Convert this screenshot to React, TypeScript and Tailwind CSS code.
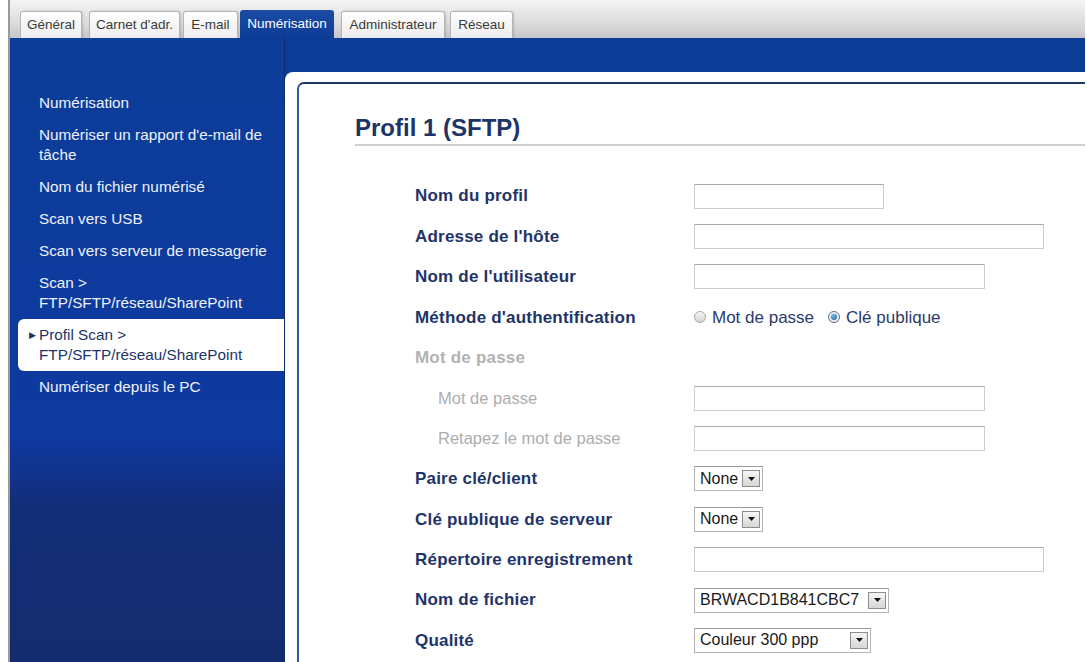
import React from "react";

// onglets du haut : largeur et marge mesurées sur la capture
const TABS = [
  { label: "Général", cls: "ml-[10px] w-[62px]" },
  { label: "Carnet d'adr.", cls: "ml-[7px] w-[91px]" },
  { label: "E-mail", cls: "ml-[3px] w-[55px]" },
  { label: "Numérisation", cls: "ml-[2px] w-[94px]", active: true },
  { label: "Administrateur", cls: "ml-[7px] w-[104px]" },
  { label: "Réseau", cls: "ml-[5px] w-[63px]" },
];

const MENU = [
  { lines: ["Numérisation"] },
  { lines: ["Numériser un rapport d'e-mail de", "tâche"] },
  { lines: ["Nom du fichier numérisé"] },
  { lines: ["Scan vers USB"] },
  { lines: ["Scan vers serveur de messagerie"] },
  { lines: ["Scan >", "FTP/SFTP/réseau/SharePoint"] },
  { lines: ["Profil Scan >", "FTP/SFTP/réseau/SharePoint"], active: true },
  { lines: ["Numériser depuis le PC"] },
];

function TextInput({ w }: { w: string }) {
  return (
    <div
      className={`${w} h-[25px] border border-[#cdcdcd] border-t-[#ababab] bg-white`}
    />
  );
}

function Select({ value, w }: { value: string; w: string }) {
  return (
    <div
      className={`${w} h-[25px] border border-[#b4b4b4] border-t-[#9a9a9a] bg-white flex items-center justify-between pl-[5px] pr-[2px]`}
    >
      <span className="text-[16px] text-[#1a1a1a] leading-none">{value}</span>
      <span className="w-[18px] h-[17px] border border-[#8d8d8d] bg-[linear-gradient(to_bottom,#f6f6f6,#d6d6d6)] flex items-center justify-center">
        <svg width="7" height="4" viewBox="0 0 7 4">
          <path d="M0 0 L7 0 L3.5 4 Z" fill="#111" />
        </svg>
      </span>
    </div>
  );
}

function Radio({ checked }: { checked?: boolean }) {
  return (
    <span
      className={
        checked
          ? "w-[12px] h-[12px] rounded-full border border-[#5d6f86] bg-[#e9eef3] flex items-center justify-center"
          : "w-[12px] h-[12px] rounded-full border border-[#a9a9a9] bg-[linear-gradient(to_bottom,#f4f4f4,#d4d4d4)]"
      }
    >
      {checked && (
        <span className="w-[6px] h-[6px] rounded-full bg-[radial-gradient(circle_at_40%_35%,#6fb7e6,#1e5f93)]" />
      )}
    </span>
  );
}

type Row = {
  label: string;
  kind?: "bold" | "muted" | "sub";
  field?: React.ReactNode;
};

const ROWS: Row[] = [
  { label: "Nom du profil", field: <TextInput w="w-[190px]" /> },
  { label: "Adresse de l'hôte", field: <TextInput w="w-[350px]" /> },
  { label: "Nom de l'utilisateur", field: <TextInput w="w-[291px]" /> },
  {
    label: "Méthode d'authentification",
    field: (
      <div className="flex items-center text-[17px] text-[#2b3a6b]">
        <Radio />
        <span className="ml-[6px]">Mot de passe</span>
        <span className="ml-[14px]">
          <Radio checked />
        </span>
        <span className="ml-[6px]">Clé publique</span>
      </div>
    ),
  },
  { label: "Mot de passe", kind: "muted" },
  { label: "Mot de passe", kind: "sub", field: <TextInput w="w-[291px]" /> },
  { label: "Retapez le mot de passe", kind: "sub", field: <TextInput w="w-[291px]" /> },
  { label: "Paire clé/client", field: <Select value="None" w="w-[69px]" /> },
  { label: "Clé publique de serveur", field: <Select value="None" w="w-[69px]" /> },
  { label: "Répertoire enregistrement", field: <TextInput w="w-[350px]" /> },
  { label: "Nom de fichier", field: <Select value="BRWACD1B841CBC7" w="w-[195px]" /> },
  {
    label: "Qualité",
    field: <Select value="Couleur 300 ppp" w="w-[177px]" />,
  },
];

export default function App() {
  return (
    <div className="w-[1087px] h-[662px] overflow-hidden bg-white pl-[8px] pr-[2px] font-['Liberation_Sans',Arial,sans-serif]">
      <div className="h-full border-l-2 border-[#9a9a9a] flex flex-col">
        {/* Onglets */}
        <div className="h-[38px] shrink-0 flex items-end bg-[linear-gradient(to_bottom,#f4f4f4,#dcdcdc_60%,#c6c6c6)]">
          {TABS.map((t) =>
            t.active ? (
              <div
                key={t.label}
                className={`${t.cls} h-[28px] rounded-t-[3px] bg-[linear-gradient(to_bottom,#1c4ba6,#0d3c97)] text-white text-[13.5px] flex items-center justify-center`}
              >
                {t.label}
              </div>
            ) : (
              <div
                key={t.label}
                className={`${t.cls} h-[27px] rounded-t-[3px] border border-b-0 border-[#b5b5b5] bg-[linear-gradient(to_bottom,#ffffff,#ececec)] text-[#3a3a3a] text-[13.5px] flex items-center justify-center shadow-[1px_0_2px_rgba(0,0,0,0.15)]`}
              >
                {t.label}
              </div>
            )
          )}
        </div>

        <div className="flex-1 flex min-h-0 bg-[#0d3c97]">
          {/* Menu latéral */}
          <div className="w-[275px] shrink-0 pt-[49px] border-r border-[#0b2c6c] bg-[linear-gradient(to_bottom,#0c3d98_0%,#0e39a0_64%,#132e78_75%,#142c6e_100%)]">
            {MENU.map((m, i) =>
              m.active ? (
                <div
                  key={i}
                  className="ml-[8px] rounded-l-[6px] bg-white py-[6px] pl-[11px] text-[15.3px] leading-[20px] text-[#1c3466] flex"
                >
                  <span className="w-[10px] text-[9px] leading-[20px] text-[#1c3466]">▶</span>
                  <div>
                    {m.lines.map((l) => (
                      <div key={l}>{l}</div>
                    ))}
                  </div>
                </div>
              ) : (
                <div
                  key={i}
                  className="py-[6px] pl-[29px] text-[15.3px] leading-[20px] text-[#eef2fa]"
                >
                  {m.lines.map((l) => (
                    <div key={l}>{l}</div>
                  ))}
                </div>
              )
            )}
          </div>

          {/* Contenu */}
          <div className="flex-1 flex flex-col pt-[34px] min-w-0">
            <div className="flex-1 bg-white rounded-tl-[8px] pl-[12px] pt-[10px] flex flex-col min-h-0">
              <div className="flex-1 border-t-2 border-l-2 border-t-[#1b3766] border-l-[#2e5cab] rounded-tl-[7px] pl-[56px] pt-[30px]">
                <div className="border-b-2 border-[#cfcfcf] pb-[2px]">
                  <h1 className="text-[24px] leading-[28px] font-bold text-[#1c3467]">
                    Profil 1 (SFTP)
                  </h1>
                </div>

                <div className="mt-[30px] pl-[60px]">
                  {ROWS.map((r, i) => (
                    <div key={i} className="h-[40.4px] flex items-center">
                      <div
                        className={
                          r.kind === "muted"
                            ? "w-[279px] text-[17px] font-bold tracking-[0.2px] text-[#b2b2b2]"
                            : r.kind === "sub"
                            ? "w-[279px] pl-[23px] text-[16.5px] text-[#adadad]"
                            : "w-[279px] text-[17px] font-bold tracking-[0.2px] text-[#1e3469]"
                        }
                      >
                        {r.label}
                      </div>
                      {r.field}
                    </div>
                  ))}
                </div>
              </div>
            </div>
          </div>
        </div>
      </div>
    </div>
  );
}
